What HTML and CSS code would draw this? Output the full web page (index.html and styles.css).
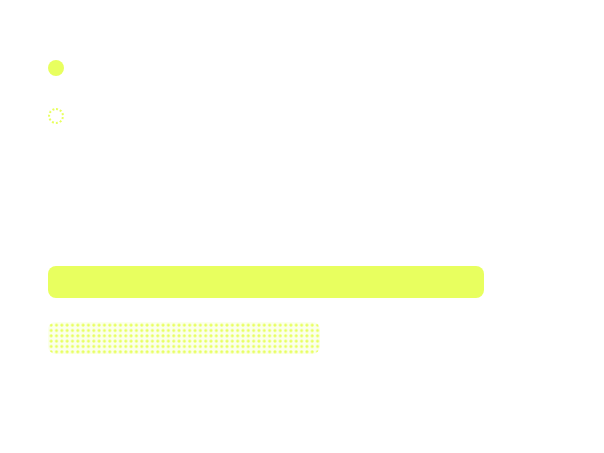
FILE: index.html
```html
<!DOCTYPE html>
<html>
<head>
<meta charset="utf-8">
<link rel="stylesheet" href="styles.css">
</head>
<body>
<div class="page">
  <div class="dot dot-filled"></div>
  <div class="dot dot-dashed"></div>
  <div class="bar"></div>
  <div class="pattern"></div>
</div>
</body>
</html>
```
FILE: styles.css
```css
html, body {
  margin: 0;
  padding: 0;
  background: #ffffff;
  font-family: "Liberation Sans", sans-serif;
}
.page {
  padding: 60px 0 0 48px;
  display: flex;
  flex-direction: column;
  align-items: flex-start;
}
.dot {
  width: 16px;
  height: 16px;
  border-radius: 50%;
  box-sizing: border-box;
}
.dot-filled {
  background: #e8ff5f;
}
.dot-dashed {
  margin-top: 32px;
  border: 2px dotted #e8ff5f;
}
.bar {
  margin-top: 142px;
  width: 436px;
  height: 32px;
  border-radius: 8px;
  background: #e8ff5f;
}
.pattern {
  margin-top: 24px;
  width: 272px;
  height: 32px;
  border-radius: 8px;
  background-color: #fbffec;
  background-image: radial-gradient(circle, #e8ff5f 1px, rgba(232,255,95,0.35) 1.6px, transparent 2px);
  background-size: 5.333px 5.333px;
  background-position: 0.5px 0.5px;
}
```
